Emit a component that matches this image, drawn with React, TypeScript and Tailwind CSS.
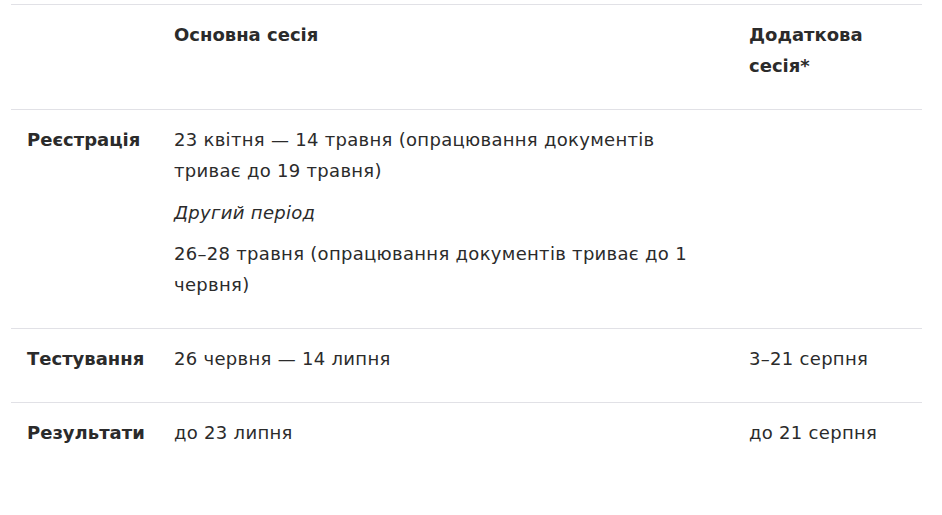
import React from "react";

const cell = "px-4 pt-[14px] pb-[28px]";
const line = "border-b border-[#e1e1e6]";

export default function App() {
  return (
    <div
      className="w-[942px] h-[515px] bg-white pt-1 px-[11px] text-[#2b2b2b] text-[18px] leading-[31px] tracking-[0.3px]"
      style={{ fontFamily: '"DejaVu Sans", "Noto Sans", sans-serif' }}
    >
      <div className="w-[911px] grid grid-cols-[147px_575px_1fr] border-t border-[#e1e1e6]">
        {/* header */}
        <div className={`${cell} ${line}`}></div>
        <div className={`${cell} ${line} font-bold tracking-normal`}>Основна сесія</div>
        <div className={`${cell} ${line} font-bold tracking-normal`}>Додаткова сесія*</div>

        {/* row 1 */}
        <div className={`${cell} ${line} font-bold tracking-normal`}>Реєстрація</div>
        <div className={`${cell} ${line} flex flex-col gap-[10.5px]`}>
          <p>23 квітня — 14 травня (опрацювання документів триває до 19 травня)</p>
          <p className="italic">Другий період</p>
          <p>26–28 травня (опрацювання документів триває до 1 червня)</p>
        </div>
        <div className={`${cell} ${line}`}></div>

        {/* row 2 */}
        <div className={`${cell} ${line} font-bold tracking-normal`}>Тестування</div>
        <div className={`${cell} ${line}`}>26 червня — 14 липня</div>
        <div className={`${cell} ${line}`}>3–21 серпня</div>

        {/* row 3 */}
        <div className={`${cell} font-bold tracking-normal`}>Результати</div>
        <div className={cell}>до 23 липня</div>
        <div className={cell}>до 21 серпня</div>
      </div>
    </div>
  );
}
